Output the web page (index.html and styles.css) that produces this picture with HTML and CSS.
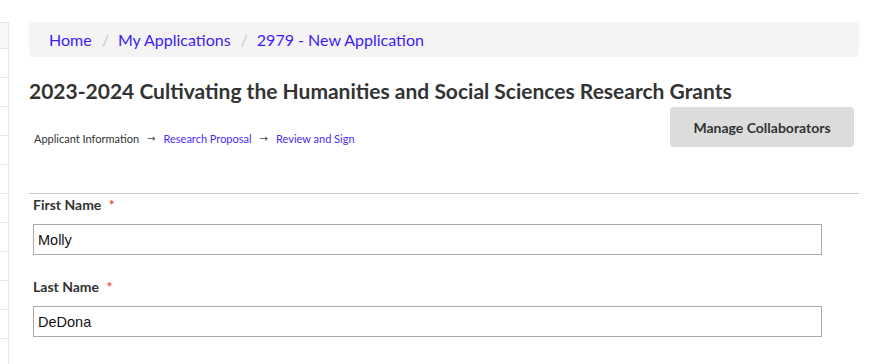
FILE: index.html
```html
<!DOCTYPE html>
<html>
<head>
<meta charset="utf-8">
<link rel="stylesheet" href="styles.css">
</head>
<body>
<div class="page">
  <aside class="side">
    <div class="side-row first"></div>
    <div class="side-row"></div>
    <div class="side-row"></div>
    <div class="side-row"></div>
    <div class="side-row"></div>
    <div class="side-row"></div>
    <div class="side-row"></div>
    <div class="side-row"></div>
    <div class="side-row"></div>
    <div class="side-row"></div>
    <div class="side-row"></div>
    <div class="side-row"></div>
  </aside>
  <main class="main">
    <nav class="crumbs">
      <a class="crumb">Home</a><span class="sep">/</span><a class="crumb">My Applications</a><span class="sep">/</span><a class="crumb">2979 - New Application</a>
    </nav>
    <h1 class="title">2023-2024 Cultivating the Humanities and Social Sciences Research Grants</h1>
    <div class="toolbar">
      <div class="steps">
        <span class="step current">Applicant Information</span>
        <span class="arrow">→</span>
        <a class="step">Research Proposal</a>
        <span class="arrow">→</span>
        <a class="step">Review and Sign</a>
      </div>
      <button class="btn">Manage Collaborators</button>
    </div>
    <hr class="rule">
    <form class="form">
      <div class="field">
        <label class="label">First Name <span class="req">*</span></label>
        <input class="input" type="text" value="Molly">
      </div>
      <div class="field">
        <label class="label">Last Name <span class="req">*</span></label>
        <input class="input" type="text" value="DeDona">
      </div>
      <div class="field">
        <label class="label">Email Address <span class="req">*</span></label>
        <input class="input" type="text" value="">
      </div>
    </form>
  </main>
</div>
</body>
</html>
```

FILE: styles.css
```css
html, body {
  margin: 0;
  padding: 0;
  background: #fff;
}
body {
  font-family: Lato, "Liberation Sans", sans-serif;
  color: #333;
  overflow: hidden;
  height: 364px;
}
.page {
  display: flex;
  align-items: flex-start;
}
.side {
  width: 8px;
  flex: none;
  margin-top: 22px;
  border-right: 1px solid #e6e6e6;
  border-top: 1px solid #e6e6e6;
}
.side-row {
  height: 28px;
  border-bottom: 1px solid #e6e6e6;
}
.side-row.first {
  height: 25px;
  background: #f7f7f7;
}
.main {
  flex: 1;
  padding: 22px 27px 0 20px;
  min-width: 0;
}
.crumbs {
  display: flex;
  align-items: center;
  height: 35px;
  padding: 0 20px;
  background: #f4f4f4;
  border-radius: 4px;
  font-size: 16px;
}
.crumb {
  color: #3d1cf5;
  text-decoration: none;
}
.sep {
  color: #c8c8c8;
  margin: 0 9px 0 10px;
}
.title {
  margin: 20px 0 0;
  font-size: 21px;
  font-weight: 700;
  line-height: 27px;
  color: #333;
}
.toolbar {
  display: flex;
  justify-content: space-between;
  align-items: flex-start;
  margin-top: 3px;
}
.steps {
  margin-top: 25px;
  padding-left: 5px;
  font-size: 11px;
  display: flex;
  align-items: center;
  gap: 8px;
}
.step {
  color: #4a2cf5;
  text-decoration: none;
}
.step.current {
  color: #333;
}
.arrow {
  color: #444;
  font-family: "DejaVu Sans", sans-serif;
  font-size: 10px;
}
.btn {
  margin-right: 5px;
  width: 184px;
  height: 40px;
  border: none;
  border-radius: 4px;
  background: #dcdcdc;
  color: #333;
  font-family: Lato, "Liberation Sans", sans-serif;
  font-weight: 700;
  font-size: 14px;
}
.rule {
  margin: 46px 0 0;
  border: none;
  border-top: 1px solid #c8c8c8;
  height: 0;
}
.form {
  padding-left: 4px;
}
.field {
  width: 789px;
  margin-top: 2px;
  margin-bottom: 23px;
}
.label {
  display: block;
  font-size: 14px;
  font-weight: 700;
  color: #333;
  line-height: 17px;
  margin-bottom: 11px;
}
.req {
  color: #e8503c;
  margin-left: 4px;
}
.input {
  display: block;
  box-sizing: border-box;
  width: 100%;
  height: 31px;
  margin: 0;
  border: 1px solid #aaa;
  padding: 0 4px;
  font-family: "Liberation Sans", Arial, sans-serif;
  font-size: 14.5px;
  color: #111;
  outline: none;
}
```
